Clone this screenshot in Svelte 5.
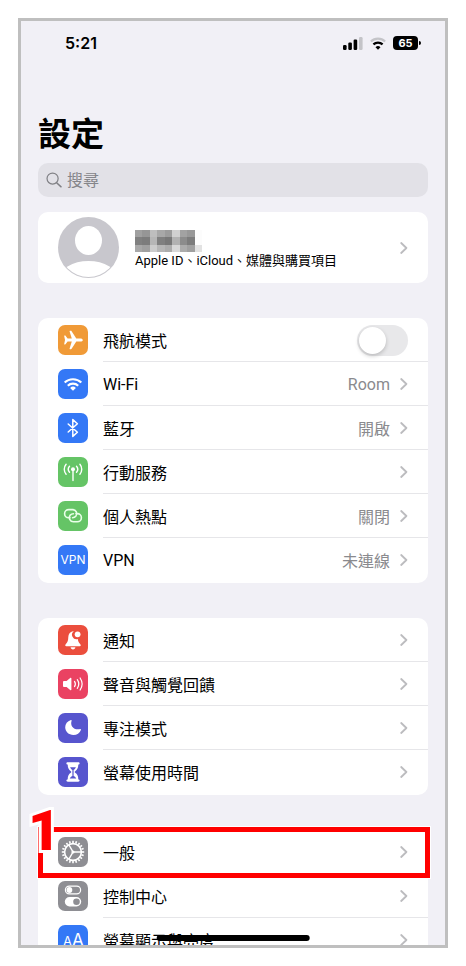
<script lang="ts">
  interface Row {
    id: string;
    label: string;
    color: string;
    value?: string;
    toggle?: boolean;
    marked?: boolean;
  }

  const groups: Row[][] = [
    [
      { id: 'airplane', label: '飛航模式', color: 'orange', toggle: true },
      { id: 'wifi', label: 'Wi-Fi', color: 'blue', value: 'Room' },
      { id: 'bluetooth', label: '藍牙', color: 'blue', value: '開啟' },
      { id: 'cellular', label: '行動服務', color: 'green' },
      { id: 'hotspot', label: '個人熱點', color: 'green', value: '關閉' },
      { id: 'vpn', label: 'VPN', color: 'blue', value: '未連線' },
    ],
    [
      { id: 'bell', label: '通知', color: 'red' },
      { id: 'sound', label: '聲音與觸覺回饋', color: 'pink' },
      { id: 'focus', label: '專注模式', color: 'indigo' },
      { id: 'screentime', label: '螢幕使用時間', color: 'indigo' },
    ],
    [
      { id: 'general', label: '一般', color: 'gray', marked: true },
      { id: 'control', label: '控制中心', color: 'gray' },
      { id: 'display', label: '螢幕顯示與亮度', color: 'blue' },
    ],
  ];

  // grey levels of the pixelated account name
  const mosaic = [
    [160, 150, 190, 168, 156, 208, 162, 152, 252],
    [128, 124, 182, 128, 120, 178, 140, 124, 252],
    [168, 160, 204, 182, 172, 216, 172, 160, 226],
  ];

  const teeth = Array.from({ length: 20 }, (_, i) => i * 18);

  let airplane = $state(false);
  let query = $state('');
</script>

{#snippet chevron()}
  <svg class="chevron" viewBox="0 0 8 12" aria-hidden="true">
    <path d="M1.2 1 L6.4 6 L1.2 11" fill="none" stroke="#bcbcbf" stroke-width="1.8" stroke-linecap="round" stroke-linejoin="round" />
  </svg>
{/snippet}

{#snippet glyph(id: string)}
  <svg viewBox="0 0 30 30" aria-hidden="true">
    {#if id === 'airplane'}
      <path fill="#fff" d="M24.8 15c0 .9-1.1 1.6-2.6 1.6h-3.900l-4.700 7.200c-.2.3-.4.400-.7.400h-.9c-.4 0-.5-.3-.4-.6l2.200-7H9.600l-1.900 2.500c-.2.200-.3.300-.6.300h-.6c-.3 0-.4-.2-.3-.5L7 15l-.8-3.900c-.1-.3 0-.5.3-.5h.6c.3 0 .4.100.6.300l1.900 2.500h4.200l-2.200-7c-.1-.3 0-.6.4-.6h.9c.3 0 .5.100.7.400l4.700 7.200h3.900c1.500 0 2.600.7 2.600 1.600z" />
    {:else if id === 'wifi'}
      <g fill="none" stroke="#fff" stroke-width="2.1">
        <path d="M6.7 13.6a11.8 11.8 0 0 1 16.6 0" />
        <path d="M9.8 16.8a7.4 7.4 0 0 1 10.4 0" />
      </g>
      <path fill="#fff" d="M15 21.8l-2.9-2.9a4.1 4.1 0 0 1 5.8 0z" />
    {:else if id === 'bluetooth'}
      <path fill="none" stroke="#fff" stroke-width="1.5" stroke-linejoin="round" stroke-linecap="round" d="M10.200 11l9.200 8.200-4.600 4.200V6.600l4.600 4.200-9.200 8.200" />
    {:else if id === 'cellular'}
      <g fill="none" stroke="#fff" stroke-width="1.4" stroke-linecap="round">
        <path d="M15 13v10.6" />
        <path d="M11.5 9.2a4.6 4.6 0 0 0 0 6M18.5 9.2a4.6 4.6 0 0 1 0 6" />
        <path d="M8.1 7.2a7.7 7.7 0 0 0 0 10M21.9 7.2a7.7 7.7 0 0 1 0 10" />
      </g>
      <circle cx="15" cy="12.2" r="2" fill="#fff" />
    {:else if id === 'hotspot'}
      <g fill="none" stroke="#e9ffe9" stroke-width="1.6" stroke-linecap="round">
        <path d="M12 16.8H10.7a4.1 4.1 0 0 1 0-8.2h3.9a4.1 4.1 0 0 1 3.200 6.700c-.8.9-1.800 1.400-3.200 1.400" />
        <path d="M18 12.6h1.3a4.100 4.100 0 0 1 0 8.200h-3.900a4.100 4.100 0 0 1-3.200-6.700c.8-.9 1.800-1.400 3.200-1.400" />
      </g>
    {:else if id === 'vpn'}
      <text class="glyph-text" x="15" y="19" font-size="12" text-anchor="middle">VPN</text>
    {:else if id === 'bell'}
      <path fill="#fff" d="M15 6.2c-3.100.5-4.600 2.700-4.700 5.800-.1 3.900-.7 5.300-2.600 7.300-.8.9-.6 2 .6 2h13.400c1.200 0 1.400-1.100.6-2-1.500-1.600-2.200-2.800-2.500-5.200a4.500 4.500 0 0 1-4-7.900zM12.600 22.300h4.800c-.2 1.300-1.100 2.100-2.400 2.100s-2.200-.8-2.400-2.100z" />
      <circle cx="19.600" cy="9.300" r="2.900" fill="#fff" />
    {:else if id === 'sound'}
      <path fill="#fff" d="M5 12.900c0-.6.3-.9.9-.9h2.700l3.600-3.100c.6-.5 1.200-.2 1.200.5v11.200c0 .7-.6 1-1.200.5L8.600 18H5.900c-.6 0-.9-.3-.9-.9z" />
      <g fill="none" stroke="#fff" stroke-width="1.2" stroke-linecap="round">
        <path d="M16.500 12.400a4.600 4.600 0 0 1 0 5.200" />
        <path d="M19.300 10.700a7.600 7.600 0 0 1 0 8.600" />
        <path d="M22.100 9a10.700 10.700 0 0 1 0 12" />
      </g>
    {:else if id === 'focus'}
      <path fill="#fff" d="M12.900 7.100c.5-.3.9.1.7.6-1.700 5 2 9.800 8.600 8.400.6-.1.9.2.7.8A8 8 0 0 1 15.400 22c-4.700 0-8.200-3.300-8.200-7.700 0-3.200 2.100-6 5.700-7.200z" />
    {:else if id === 'screentime'}
      <path fill="#fff" d="M9.800 5.200h10.400c.9 0 1.400.5 1.400 1.200s-.5 1.200-1.300 1.200c0 3.400-1.100 5.300-3.100 6.600-.6.4-.6 1.200 0 1.600 2 1.300 3.100 3.200 3.100 6.600.8 0 1.300.5 1.300 1.200s-.5 1.200-1.400 1.200H9.800c-.9 0-1.400-.5-1.400-1.200s.5-1.200 1.300-1.200c0-3.400 1.100-5.300 3.100-6.600.6-.4.6-1.200 0-1.600-2-1.300-3.100-3.200-3.100-6.600-.8 0-1.300-.5-1.300-1.200s.5-1.200 1.400-1.200z" />
      <path fill="#5755ce" d="M12.100 10.200h5.800c-.4 1.200-1.200 2-2.300 2.700v6c1.500.8 2.400 1.600 2.700 2.700h-6.600c.3-1.100 1.200-1.900 2.700-2.700v-6c-1.100-.7-1.900-1.500-2.300-2.700z" />
    {:else if id === 'general'}
      <g fill="none" stroke="#fff">
        <circle cx="15" cy="15" r="8.400" stroke-width="1.600" />
        {#each teeth as angle (angle)}
          <path d="M15 6V3.800" stroke-width="1.600" transform="rotate({angle} 15 15)" />
        {/each}
        <path d="M15 15h8M15 15l-4-7M15 15l-4 7" stroke-width="1.500" />
      </g>
      <circle cx="15" cy="15" r="1.600" fill="#fff" />
    {:else if id === 'control'}
      <rect x="7.400" y="5.100" width="15.200" height="7.800" rx="3.900" fill="none" stroke="#fff" stroke-width="1.200" />
      <circle cx="11.400" cy="9" r="2.900" fill="#fff" />
      <rect x="6.800" y="16" width="16.400" height="9.400" rx="4.700" fill="#fff" />
      <circle cx="18.500" cy="20.700" r="3.300" fill="#8e8e93" />
    {:else if id === 'display'}
      <text class="glyph-text" x="5" y="21" font-size="13">A</text>
      <text class="glyph-text" x="14" y="21" font-size="17">A</text>
    {/if}
  </svg>
{/snippet}

<div class="phone">
  <header class="status">
    <time>5:21</time>
    <div class="indicators">
      <svg class="signal" viewBox="0 0 20 14" aria-hidden="true">
        <rect x="0" y="9" width="3.600" height="5" rx="1.200" />
        <rect x="5.300" y="6.500" width="3.600" height="7.500" rx="1.200" />
        <rect x="10.600" y="3.500" width="3.600" height="10.500" rx="1.200" />
        <rect x="16" y="1" width="3.600" height="13" rx="1.200" fill="#c4c4c8" />
      </svg>
      <svg class="wifi" viewBox="0 0 16 13" aria-hidden="true">
        <path d="M.9 4.500a10.200 10.200 0 0 1 14.200 0" fill="none" stroke="#c4c4c8" stroke-width="2.200" />
        <path d="M3.400 7.400a6.600 6.600 0 0 1 9.200 0" fill="none" stroke="#000" stroke-width="2.200" />
        <path d="M8 12.800L5.500 10.200a3.600 3.600 0 0 1 5 0z" />
      </svg>
      <span class="battery">65</span>
    </div>
  </header>

  <main>
    <h1>設定</h1>

    <label class="search">
      <svg viewBox="0 0 17 17" aria-hidden="true">
        <circle cx="7" cy="7" r="5.900" fill="none" stroke="#808085" stroke-width="1.300" />
        <path d="M11.300 11.300l4.700 4.500" stroke="#808085" stroke-width="1.500" stroke-linecap="round" />
      </svg>
      <input type="text" placeholder="搜尋" aria-label="搜尋" bind:value={query} />
    </label>

    <button class="card profile" type="button">
      <svg class="avatar" viewBox="0 0 61 61" aria-hidden="true">
        <defs>
          <clipPath id="avatar-clip"><circle cx="30.500" cy="30.500" r="29.500" /></clipPath>
        </defs>
        <circle cx="30.500" cy="30.500" r="30.500" fill="#c8c7cd" />
        <g clip-path="url(#avatar-clip)" fill="#fff">
          <ellipse cx="30.500" cy="23.500" rx="13.500" ry="14.500" />
          <ellipse cx="30.500" cy="62" rx="29" ry="18" />
        </g>
      </svg>
      <span class="who">
        <svg class="mosaic" viewBox="0 0 9 3" preserveAspectRatio="none" shape-rendering="crispEdges" aria-hidden="true">
          {#each mosaic as line, y}
            {#each line as level, x}
              <rect {x} {y} width="1" height="1" fill="rgb({level} {level} {level})" />
            {/each}
          {/each}
        </svg>
        <span class="services">Apple ID、iCloud、媒體與購買項目</span>
      </span>
      {@render chevron()}
    </button>

    {#each groups as rows}
      <ul class="card">
        {#each rows as row (row.id)}
          <li class:marked={row.marked}>
            {#if row.toggle}
              <label class="row">
                <span class="icon {row.color}">{@render glyph(row.id)}</span>
                <span class="body">
                  <span class="label">{row.label}</span>
                  <input class="switch" type="checkbox" role="switch" bind:checked={airplane} />
                </span>
              </label>
            {:else}
              <button class="row" type="button">
                <span class="icon {row.color}">{@render glyph(row.id)}</span>
                <span class="body">
                  <span class="label">{row.label}</span>
                  {#if row.value}<span class="value">{row.value}</span>{/if}
                  {@render chevron()}
                </span>
              </button>
            {/if}
            {#if row.marked}
              <span class="mark"><b>1</b></span>
            {/if}
          </li>
        {/each}
      </ul>
    {/each}
  </main>

  <div class="home-bar"></div>
</div>

<style>
  :global(body) {
    background: #fff;
  }

  .phone {
    position: relative;
    box-sizing: border-box;
    height: calc(100vh - 36px);
    margin: 18px;
    overflow: hidden;
    border: 3px solid #bfbfbf;
    background: #f1f0f6;
    color: #000;
    font-family: Roboto, "Noto Sans CJK TC", sans-serif;
    font-size: 16px;
  }

  .status {
    display: flex;
    align-items: center;
    justify-content: space-between;
    height: 44px;
    padding: 0 25px 0 44px;
    font-family: Inter, sans-serif;
  }
  .status time {
    font-weight: 600;
  }
  .indicators {
    display: flex;
    align-items: center;
    gap: 7px;
  }
  .signal { width: 20px; height: 14px; }
  .wifi { width: 16px; height: 13px; }
  .battery {
    position: relative;
    width: 25px;
    height: 14px;
    margin-right: 2px;
    border-radius: 4px;
    background: #000;
    color: #fff;
    font-size: 11px;
    font-weight: 700;
    line-height: 14px;
    text-align: center;
  }
  .battery::after {
    content: '';
    position: absolute;
    top: 5px;
    right: -3px;
    width: 2px;
    height: 4px;
    border-radius: 0 2px 2px 0;
    background: #000;
  }

  main {
    display: flex;
    flex-direction: column;
    padding: 46px 17px 0;
  }

  h1 {
    margin: 0 0 4px;
    font-size: 33px;
    font-weight: 700;
    line-height: 48px;
  }

  .search {
    display: flex;
    align-items: center;
    gap: 5px;
    height: 34px;
    margin-bottom: 15px;
    padding: 0 8px;
    border-radius: 10px;
    background: #e2e1e7;
  }
  .search svg { width: 16px; height: 16px; }
  .search input {
    flex: 1;
    min-width: 0;
    padding: 0;
    border: 0;
    outline: 0;
    background: none;
    font: inherit;
  }
  .search input::placeholder { color: #85858a; opacity: 1; }

  .card {
    margin: 0 0 35px;
    padding: 0 0 1px;
    border: 0;
    border-radius: 10px;
    background: #fff;
    list-style: none;
  }

  .profile {
    display: flex;
    align-items: center;
    gap: 16px;
    height: 71px;
    padding: 0 20px;
    color: inherit;
    font: inherit;
    text-align: left;
  }
  .avatar { flex: none; width: 61px; height: 61px; }
  .who {
    flex: 1;
    display: flex;
    flex-direction: column;
    padding-top: 4px;
  }
  .mosaic { width: 67px; height: 22px; }
  .services {
    font-size: 13px;
    line-height: 18px;
    white-space: nowrap;
  }

  .row {
    box-sizing: border-box;
    display: flex;
    align-items: center;
    gap: 15px;
    width: 100%;
    height: 44px;
    padding: 0 0 0 20px;
    border: 0;
    background: none;
    color: inherit;
    font: inherit;
    text-align: left;
  }
  .icon {
    flex: none;
    width: 30px;
    height: 30px;
    border-radius: 7px;
  }
  .icon svg { display: block; width: 100%; height: 100%; }
  .orange { background: #f09a37; }
  .blue { background: #3478f6; }
  .green { background: #65c466; }
  .red { background: #eb4e3d; }
  .pink { background: #ea4262; }
  .indigo { background: #5755ce; }
  .gray { background: #8e8e93; }

  .glyph-text {
    fill: #fff;
    font-family: Inter, sans-serif;
  }

  .body {
    flex: 1;
    display: flex;
    align-items: center;
    gap: 10px;
    height: 100%;
    padding-right: 20px;
  }
  li:not(:first-child) .body {
    box-shadow: 0 -1px #e6e6e9;
  }
  .label { flex: 1; }
  .value { color: #8a8a8e; }
  .chevron { flex: none; width: 8px; height: 12px; }

  .switch {
    appearance: none;
    box-sizing: border-box;
    width: 51px;
    height: 31px;
    margin: 0;
    padding: 2px;
    border-radius: 16px;
    background: #e8e8ea;
  }
  .switch::before {
    content: '';
    display: block;
    width: 27px;
    height: 27px;
    border-radius: 50%;
    background: #fff;
    box-shadow: 0 2px 4px rgba(0, 0, 0, 0.2);
  }
  .switch:checked { background: #65c466; }
  .switch:checked::before { margin-left: 20px; }

  .marked { position: relative; }
  .mark {
    position: absolute;
    inset: -3px -2px -4px 0;
    border: 5px solid #f00;
    outline: 1px solid #fff;
    pointer-events: none;
  }
  .mark b {
    position: absolute;
    top: -33px;
    left: -15px;
    color: #f00;
    font-family: Roboto, sans-serif;
    font-size: 56px;
    font-weight: 900;
    line-height: 64px;
    -webkit-text-stroke: 6px #fff;
    paint-order: stroke fill;
  }

  .home-bar {
    position: absolute;
    bottom: 4px;
    left: 50%;
    width: 36%;
    height: 6px;
    border-radius: 3px;
    background: #000;
    transform: translateX(-50%);
  }
</style>
